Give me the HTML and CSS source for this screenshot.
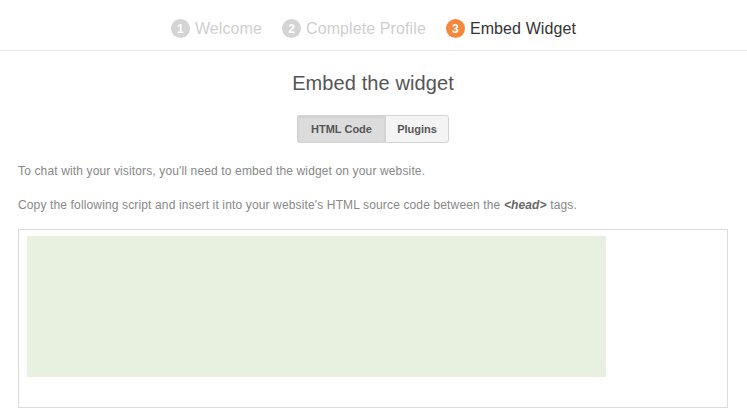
FILE: index.html
```html
<!DOCTYPE html>
<html lang="en">
<head>
    <meta charset="UTF-8">
    <meta name="viewport" content="width=device-width, initial-scale=1.0">
    <title>Embed Widget</title>
    <link rel="stylesheet" href="styles.css">
</head>
<body>
    <div class="steps">
        <div class="step"><span class="num">1</span>Welcome</div>
        <div class="step"><span class="num">2</span>Complete Profile</div>
        <div class="step active"><span class="num">3</span>Embed Widget</div>
    </div>
    <div class="content">
        <h2>Embed the widget</h2>
        <div class="tabs">
            <button class="tab selected">HTML Code</button>
            <button class="tab">Plugins</button>
        </div>
        <p>To chat with your visitors, you'll need to embed the widget on your website.</p>
        <p>Copy the following script and insert it into your website's HTML source code between the <b><i>&lt;head&gt;</i></b> tags.</p>
        <div class="code-box">
            <div class="code"></div>
        </div>
    </div>
</body>
</html>
```

FILE: styles.css
```css
body {
    font-family: "Liberation Sans", Arial, sans-serif;
    margin: 0;
    padding: 0;
    background: #fff;
}
.steps {
    height: 51px;
    box-sizing: border-box;
    border-bottom: 1px solid #e6e6e6;
    display: flex;
    justify-content: center;
    align-items: center;
    gap: 20px;
    padding-top: 7px;
}
.step {
    display: flex;
    align-items: center;
    gap: 5px;
    font-size: 16px;
    letter-spacing: 0.1px;
    color: #cfcfcf;
}
.step .num {
    width: 19px;
    height: 19px;
    border-radius: 50%;
    background: #d4d4d4;
    color: #fff;
    font-size: 12px;
    font-weight: bold;
    letter-spacing: 0;
    display: flex;
    align-items: center;
    justify-content: center;
}
.step.active {
    color: #333;
}
.step.active .num {
    background: #f5883b;
}
.content {
    padding: 0 19px 0 18px;
}
h2 {
    margin: 20px 0 20px;
    font-size: 20px;
    line-height: 24px;
    font-weight: normal;
    letter-spacing: 0.1px;
    color: #555;
    text-align: center;
}
.tabs {
    display: flex;
    justify-content: center;
    margin-bottom: 20px;
}
.tab {
    height: 28px;
    font-family: inherit;
    font-size: 11px;
    font-weight: bold;
    color: #555;
    background: #f4f4f4;
    border: 1px solid #d4d4d4;
    padding: 0;
    width: 64px;
    border-radius: 0 3px 3px 0;
}
.tab.selected {
    width: 88px;
    background: #dcdcdc;
    border-right: none;
    border-radius: 3px 0 0 3px;
    box-shadow: inset 0 1px 3px rgba(0, 0, 0, 0.08);
}
p {
    margin: 0 0 18px;
    font-size: 12px;
    line-height: 16px;
    letter-spacing: 0.14px;
    color: #888;
}
p b {
    color: #666;
}
.code-box {
    margin-top: -2px;
    height: 179px;
    box-sizing: border-box;
    border: 1px solid #dcdcdc;
    padding: 6px 8px;
}
.code {
    width: 579px;
    height: 141px;
    background: #e8f1e0;
}
```
